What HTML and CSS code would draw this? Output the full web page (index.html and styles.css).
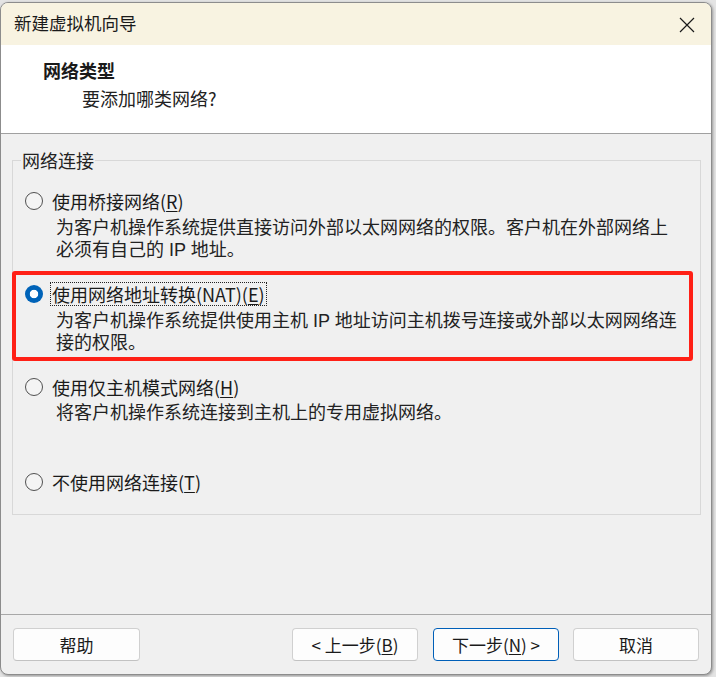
FILE: index.html
```html
<!DOCTYPE html>
<html lang="zh-CN">
<head>
<meta charset="utf-8">
<title>新建虚拟机向导</title>
<link rel="stylesheet" href="styles.css">
</head>
<body>
<div class="window">
  <div class="titlebar">
    <span class="title">新建虚拟机向导</span>
    <svg class="close" width="16" height="16" viewBox="0 0 16 16"><path d="M1 1 L15 15 M15 1 L1 15" stroke="#1a1a1a" stroke-width="1.2" fill="none"/></svg>
  </div>
  <div class="header">
    <div class="h-title">网络类型</div>
    <div class="h-sub">要添加哪类网络?</div>
  </div>
  <div class="main">
    <fieldset class="group">
      <legend class="legend">网络连接</legend>
      <div class="option opt1">
        <div class="row"><span class="radio"></span><span class="label">使用桥接网络(<u>R</u>)</span></div>
        <div class="desc"><div class="line">为客户机操作系统提供直接访问外部以太网网络的权限。客户机在外部网络上</div><div class="line">必须有自己的 IP 地址。</div></div>
      </div>
      <div class="option opt2">
        <span class="highlight"></span>
        <div class="row"><span class="radio checked"></span><span class="label focus">使用网络地址转换(NAT)(<u>E</u>)</span></div>
        <div class="desc"><div class="line">为客户机操作系统提供使用主机 IP 地址访问主机拨号连接或外部以太网网络连</div><div class="line">接的权限。</div></div>
      </div>
      <div class="option opt3">
        <div class="row"><span class="radio"></span><span class="label">使用仅主机模式网络(<u>H</u>)</span></div>
        <div class="desc"><div class="line">将客户机操作系统连接到主机上的专用虚拟网络。</div></div>
      </div>
      <div class="option opt4">
        <div class="row"><span class="radio"></span><span class="label">不使用网络连接(<u>T</u>)</span></div>
      </div>
    </fieldset>
  </div>
  <div class="footer">
    <button class="btn">帮助</button>
    <div class="spacer"></div>
    <button class="btn">&lt; 上一步(<u>B</u>)</button>
    <button class="btn default">下一步(<u>N</u>) &gt;</button>
    <button class="btn">取消</button>
  </div>
</div>
</body>
</html>
```

FILE: styles.css
```css
* { box-sizing: border-box; }
html, body { margin: 0; padding: 0; }
body {
  background: #e4e4e4;
  padding-top: 2px;
  width: 716px;
  height: 677px;
  overflow: hidden;
  font-family: "Noto Sans CJK SC", "Noto Sans", sans-serif;
  color: #1a1a1a;
}
.window {
  width: 712px;
  height: 673px;
  border: 1px solid #8c8c8c;
  border-radius: 8px;
  overflow: hidden;
  background: #f0f0f0;
  display: flex;
  flex-direction: column;
  box-shadow: 1px 1px 3px rgba(0,0,0,0.35);
}
.titlebar {
  height: 42px;
  flex: none;
  background: #f8f3e1;
  display: flex;
  align-items: center;
  padding-left: 13px;
  padding-right: 16px;
}
.title {
  font-size: 17.5px;
  line-height: 24px;
  flex: 1;
  margin-top: -2px;
}
.close { display: block; margin-top: 1px; }
.header {
  height: 89px;
  flex: none;
  background: #ffffff;
  border-bottom: 1px solid #a0a0a0;
  padding-top: 13px;
}
.h-title {
  font-size: 18px;
  line-height: 24px;
  font-weight: 700;
  padding-left: 42px;
}
.h-sub {
  font-size: 18px;
  line-height: 24px;
  margin-top: 4px;
  padding-left: 81px;
  color: #222;
}
.main {
  flex: 1;
  padding: 15px 10px 0 11px;
}
.group {
  margin: 0;
  border: 1px solid #d8d8d8;
  padding: 18px 12px 20px 12px;
  min-width: 0;
}
.legend {
  font-size: 18px;
  line-height: 22px;
  padding: 0 1px;
  margin-left: -4px;
  color: #222;
}
.option { position: relative; }
.opt2 { margin-top: 21px; }
.opt3 { margin-top: 21px; }
.opt4 { margin-top: 46px; }
.row {
  display: flex;
  align-items: center;
  height: 24px;
}
.radio {
  width: 18px;
  height: 18px;
  border: 1px solid #505050;
  border-radius: 50%;
  flex: none;
  margin-right: 7px;
  background: #f4f4f4;
}
.radio.checked {
  border: none;
  background: radial-gradient(circle, #ffffff 0 3.8px, #0063b8 4.6px);
}
.label {
  font-size: 18px;
  line-height: 22px;
  padding: 0 1px;
  border: 1px solid transparent;
  white-space: nowrap;
}
.label.focus { border: 1px dotted #222; }
.label u, .btn u { text-decoration-thickness: 1px; text-underline-offset: 2px; }
.desc {
  padding-left: 31px;
  margin-top: 4px;
  white-space: nowrap;
  color: #222;
  font-family: "Liberation Sans", "Noto Sans CJK SC", sans-serif;
}
.line {
  font-size: 18px;
  line-height: 22px;
  height: 22px;
}
.opt3 .desc { margin-top: 3px; }
.highlight {
  position: absolute;
  left: -13px;
  top: -11px;
  width: 681px;
  height: 90px;
  border: 4px solid #ff2016;
  border-radius: 3px;
  pointer-events: none;
}
.footer {
  height: 60px;
  flex: none;
  border-top: 1px solid #a8a8a8;
  display: flex;
  align-items: flex-start;
  padding: 13px 12px 0 12px;
}
.spacer { flex: 1; }
.btn {
  width: 126px;
  height: 33px;
  background: #fdfdfd;
  border: 1px solid #d0d0d0;
  border-bottom-color: #c2c2c2;
  border-radius: 4px;
  font-family: "Noto Sans CJK SC", "Noto Sans", sans-serif;
  font-size: 17px;
  color: #1a1a1a;
  padding: 0;
  line-height: 30px;
  margin-left: 15px;
}
.btn:first-child { margin-left: 0; width: 127px; }
.btn:nth-child(3) { width: 126px; margin-left: 0; }
.btn:last-child { margin-left: 14px; }
.btn.default { border-color: #005fb8; }
```
